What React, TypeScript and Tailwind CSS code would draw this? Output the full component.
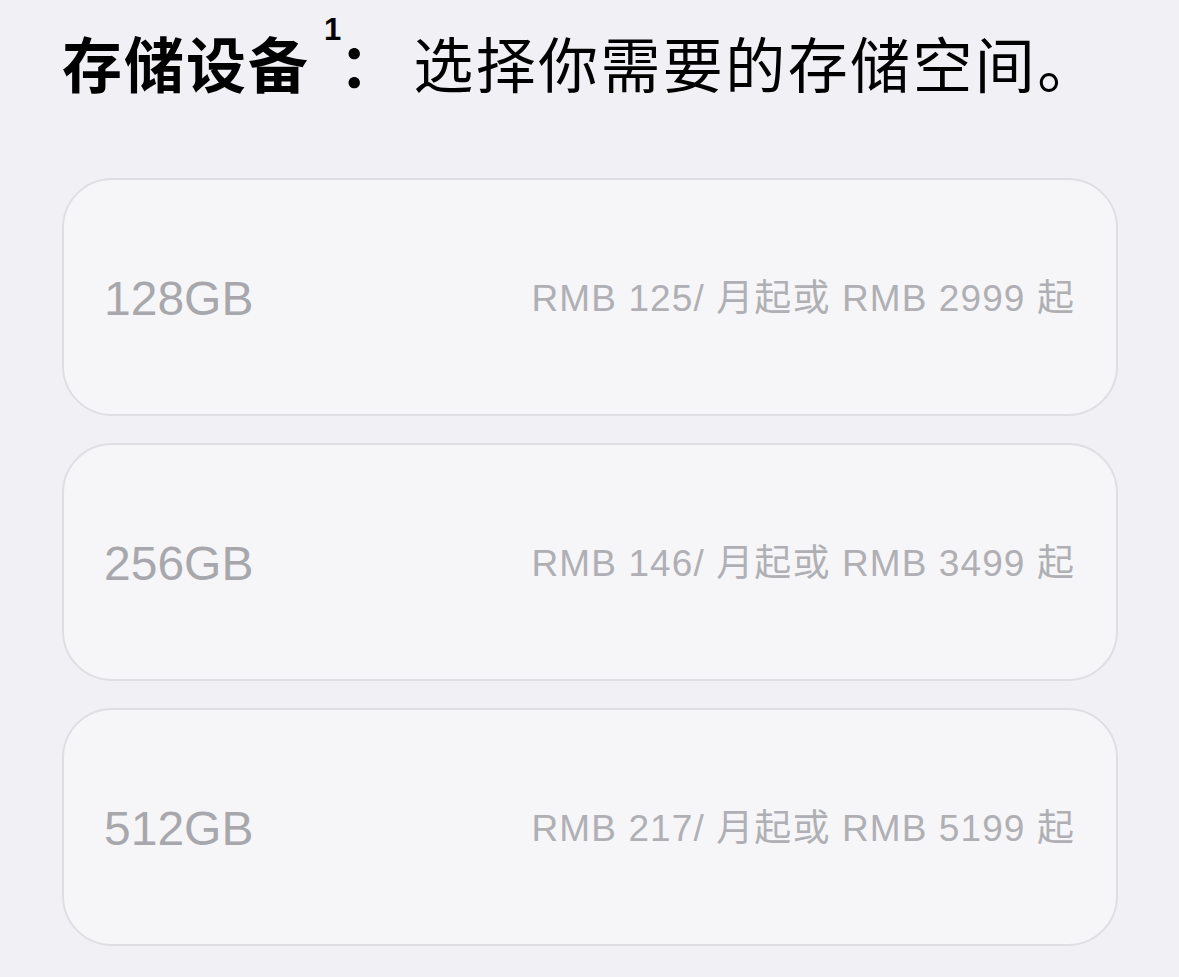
import React from "react";

const options = [
  { size: "128GB", monthly: "125", total: "2999" },
  { size: "256GB", monthly: "146", total: "3499" },
  { size: "512GB", monthly: "217", total: "5199" },
];

const font = {
  fontFamily: '"Liberation Sans", "Noto Sans CJK SC", sans-serif',
};

export default function App() {
  return (
    <div
      className="min-h-[977px] w-[1179px] bg-[#f1f1f5] px-[62px] pt-[26px]"
      style={font}
    >
      <h2 className="flex items-start text-[60px] leading-[84px] text-black">
        <span className="font-bold tracking-[2px]">存储设备</span>
        <span className="relative top-[-12px] ml-[14px] text-[31px] font-bold leading-none">1</span>
        <span className="-ml-[2px] font-bold">：</span>
        <span className="ml-[14px] font-normal tracking-[2.4px]">选择你需要的存储空间。</span>
      </h2>
      <div className="mt-[68px] flex flex-col gap-[27px]">
        {options.map((o) => (
          <div
            key={o.size}
            className="flex h-[238px] w-[1056px] items-center justify-between rounded-[50px] border-[2.5px] border-[#dfdfe3] bg-[#f6f6f9] pl-[40px] pr-[41px]"
          >
            <span className="mt-[3px] text-[48px] leading-none text-[#a8a8ac]">{o.size}</span>
            <span className="mt-[3px] text-[37px] leading-none tracking-[1.1px] text-[#b0b0b4]">
              RMB {o.monthly}/ 月起或 RMB {o.total} 起
            </span>
          </div>
        ))}
      </div>
    </div>
  );
}
